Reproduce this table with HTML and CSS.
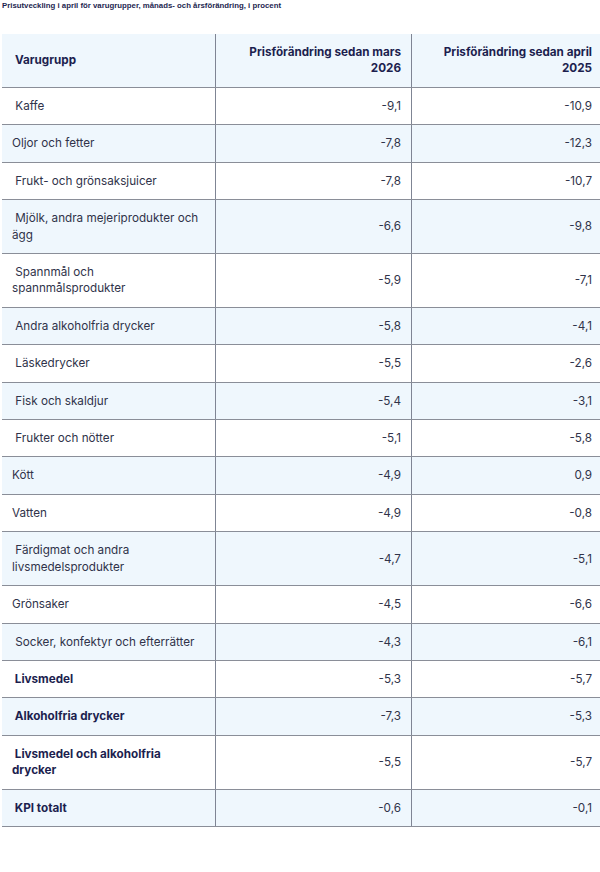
FILE: index.html
```html
<!DOCTYPE html>
<html lang="sv">
<head>
<meta charset="utf-8">
<title>Prisutveckling</title>
<link rel="stylesheet" href="styles.css">
</head>
<body>
<div class="caption">Prisutveckling i april för varugrupper, månads- och årsförändring, i procent</div>
<table class="data">
  <thead>
    <tr>
      <th class="name">Varugrupp</th>
      <th class="num">Prisförändring sedan mars 2026</th>
      <th class="num">Prisförändring sedan april 2025</th>
    </tr>
  </thead>
  <tbody>
    <tr><td>&nbsp;Kaffe</td><td class="num">-9,1</td><td class="num">-10,9</td></tr>
    <tr><td>Oljor och fetter</td><td class="num">-7,8</td><td class="num">-12,3</td></tr>
    <tr><td>&nbsp;Frukt- och grönsaksjuicer</td><td class="num">-7,8</td><td class="num">-10,7</td></tr>
    <tr><td>&nbsp;Mjölk, andra mejeriprodukter och ägg</td><td class="num">-6,6</td><td class="num">-9,8</td></tr>
    <tr><td>&nbsp;Spannmål och spannmålsprodukter</td><td class="num">-5,9</td><td class="num">-7,1</td></tr>
    <tr><td>&nbsp;Andra alkoholfria drycker</td><td class="num">-5,8</td><td class="num">-4,1</td></tr>
    <tr><td>&nbsp;Läskedrycker</td><td class="num">-5,5</td><td class="num">-2,6</td></tr>
    <tr><td>&nbsp;Fisk och skaldjur</td><td class="num">-5,4</td><td class="num">-3,1</td></tr>
    <tr><td>&nbsp;Frukter och nötter</td><td class="num">-5,1</td><td class="num">-5,8</td></tr>
    <tr><td>Kött</td><td class="num">-4,9</td><td class="num">0,9</td></tr>
    <tr><td>Vatten</td><td class="num">-4,9</td><td class="num">-0,8</td></tr>
    <tr><td>&nbsp;Färdigmat och andra livsmedelsprodukter</td><td class="num">-4,7</td><td class="num">-5,1</td></tr>
    <tr><td>Grönsaker</td><td class="num">-4,5</td><td class="num">-6,6</td></tr>
    <tr><td>&nbsp;Socker, konfektyr och efterrätter</td><td class="num">-4,3</td><td class="num">-6,1</td></tr>
    <tr><td class="strong">&nbsp;Livsmedel</td><td class="num">-5,3</td><td class="num">-5,7</td></tr>
    <tr><td class="strong">&nbsp;Alkoholfria drycker</td><td class="num">-7,3</td><td class="num">-5,3</td></tr>
    <tr><td class="strong">&nbsp;Livsmedel och alkoholfria drycker</td><td class="num">-5,5</td><td class="num">-5,7</td></tr>
    <tr><td class="strong">&nbsp;KPI totalt</td><td class="num">-0,6</td><td class="num">-0,1</td></tr>
  </tbody>
</table>
</body>
</html>
```

FILE: styles.css
```css
html, body {
  margin: 0;
  padding: 0;
  background: #ffffff;
}
body {
  font-family: Inter, "Noto Sans", "Liberation Sans", sans-serif;
  color: #30334a;
}
.caption {
  font-family: "Liberation Sans", Arial, sans-serif;
  font-weight: bold;
  font-size: 7.8px;
  line-height: 10px;
  color: #1d1f4f;
  padding: 1px 0 0 2px;
  height: 34px;
  box-sizing: border-box;
}
.data {
  margin-left: 2px;
  width: 598px;
  border-collapse: collapse;
  table-layout: fixed;
  font-size: 11.7px;
  line-height: 16.42px;
}
.data th, .data td {
  padding: 10px 10px 10px 10px;
  border-bottom: 1px solid #8a8e98;
  vertical-align: middle;
  text-align: left;
}
.data th + th, .data td + td {
  border-left: 1px solid #7f8594;
}
.data th:nth-child(1) { width: 190px; }
.data th:nth-child(2) { width: 175px; }
.data th {
  font-weight: bold;
  color: #1d1f4f;
  background: #eff7fd;
  padding-left: 13px;
}
.data th.num { padding-left: 10px; }
.data .num {
  text-align: right;
}
.data th:nth-child(3), .data td:nth-child(3) {
  padding-right: 8px;
}
.data tbody tr:nth-child(even) td {
  background: #eff7fd;
}
.data td.strong {
  font-weight: bold;
  color: #1d1f4f;
}
```
